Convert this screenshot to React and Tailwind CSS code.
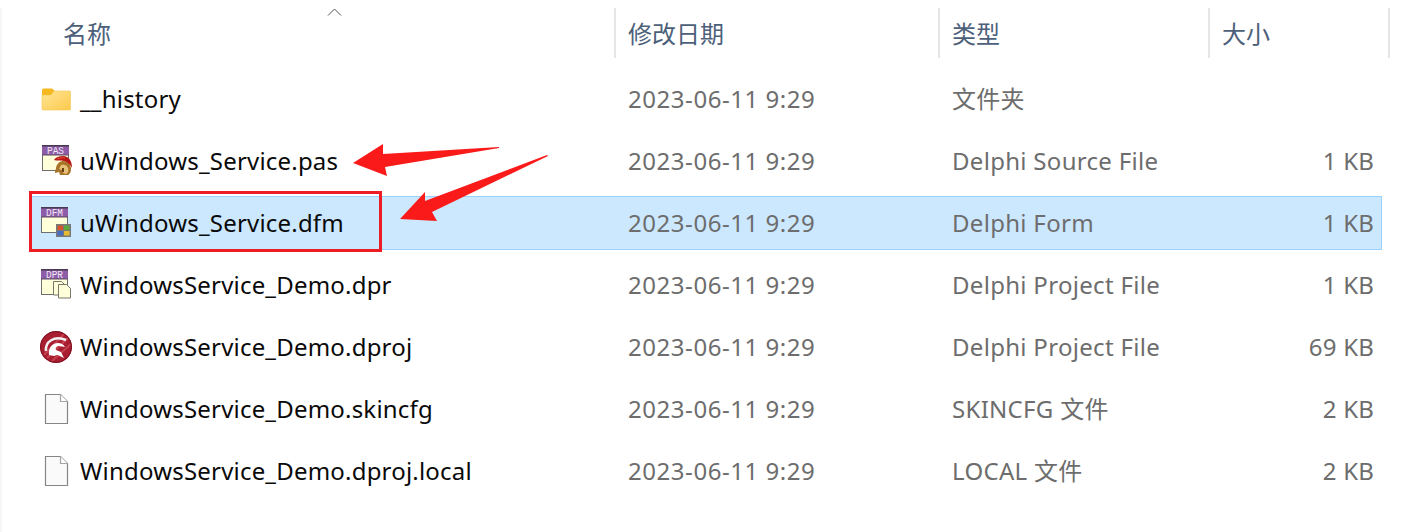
const FONT = "font-['Noto_Sans','Noto_Sans_CJK_SC',sans-serif]";

function Folder() {
  return (
    <svg width="30" height="24" viewBox="0 0 30 24">
      <defs>
        <linearGradient id="folderBody" x1="0" y1="0" x2="1" y2="1">
          <stop offset="0" stopColor="#ffe596" />
          <stop offset="1" stopColor="#fcc94c" />
        </linearGradient>
      </defs>
      <path d="M1 3a1.500 1.500 0 0 1 1.500-1.500h8.500l3 2.500v4h-13z" fill="#f5b81e" />
      <path d="M1 8h9l3-4h15.500a1 1 0 0 1 1 1V22a1 1 0 0 1-1 1H2a1 1 0 0 1-1-1z" fill="url(#folderBody)" stroke="#f3c650" strokeWidth=".6" />
    </svg>
  );
}

function DelphiBase({ label, children }) {
  return (
    <svg width="34" height="34" viewBox="0 0 34 34" className="overflow-visible">
      <rect x="1.500" y="1.500" width="26" height="25" fill="#ffffd9" stroke="#6f6f6f" />
      <rect x="1" y="1" width="27" height="10" fill="#8e5da8" />
      <rect x="1" y="1" width="27" height="1.500" fill="#47394f" />
      <rect x="1" y="10.500" width="27" height="1" fill="#5c4a66" />
      <text x="14.500" y="9.800" textAnchor="middle" fontSize="11" textLength="17" lengthAdjust="spacingAndGlyphs" fill="#f1e8f6" fontFamily="'Liberation Mono', monospace">{label}</text>
      {children}
    </svg>
  );
}

function Helmet() {
  return (
    <g>
      <path d="M15 25c0-4 3-8 7-8 5 0 8 3 8 8 0 3-1 5-3 6h-8l-1-3-4 1c0-2 0-3 1-4z" fill="#a8742a" />
      <path d="M20 21c3-1 6 0 7 3 1 3 0 5-2 6l-3-1-1-3-3-1z" fill="#e6c078" />
      <path d="M13 16c2-3 5-4 9-4 6 0 9 5 9 12-2-4-4-6-8-7-4-1-7 0-10-1z" fill="#b81616" />
      <path d="M16 15c3-1 5-2 8-1" stroke="#dd4a3a" strokeWidth="1" fill="none" />
      <path d="M21 24h2v4h-2z" fill="#6b3f14" />
    </g>
  );
}

function Grid() {
  return (
    <g>
      <rect x="16" y="18" width="15" height="13" fill="#77787c" />
      <rect x="17.500" y="19.500" width="5.500" height="4.500" fill="#d6542c" />
      <rect x="24" y="19.500" width="5.500" height="4.500" fill="#5ca83c" />
      <rect x="17.500" y="25" width="5.500" height="4.500" fill="#4a6cc0" />
      <rect x="24" y="25" width="5.500" height="4.500" fill="#e8bc30" />
    </g>
  );
}

function Pages() {
  return (
    <g fill="#ffffd9" stroke="#77776a">
      <path d="M13.500 13.500h8l3.500 3.500v10h-11.500z" />
      <path d="M18.500 16.500h8l4 4v9.500h-12z" />
    </g>
  );
}

function DelphiLogo() {
  return (
    <svg width="34" height="34" viewBox="0 0 34 34">
      <circle cx="17" cy="17" r="16" fill="#a81e30" />
      <path d="M5 25 25 4M8 28 29 8M13 31 32 14" stroke="#c4404f" strokeWidth="2" />
      <circle cx="17" cy="17" r="15.500" fill="none" stroke="#7c1020" />
      <path d="M7 21C6 12 15 5 27 10" fill="none" stroke="#f0f0f0" strokeWidth="2.500" />
      <path d="M10 25c-1-7 3-12 9-12 3 0 5 1 7 4l-6-1c-2 0-4 2-3 4l5 2 3 6c-3-1-5-3-7-3l-3 1z" fill="#ffffff" />
    </svg>
  );
}

function Doc() {
  return (
    <svg width="25" height="32" viewBox="0 0 25 32">
      <path d="M1.500 1.500h15l7 7v22h-22z" fill="#fafafa" stroke="#858585" strokeWidth="1.200" />
      <path d="M16.500 1.500v7h7" fill="#ffffff" stroke="#a5a5a5" strokeWidth="1.200" />
    </svg>
  );
}

const rows = [
  { icon: <Folder />, name: "__history", date: "2023-06-11 9:29", type: "文件夹", size: "", iconClass: "" },
  { icon: <DelphiBase label="PAS"><Helmet /></DelphiBase>, name: "uWindows_Service.pas", date: "2023-06-11 9:29", type: "Delphi Source File", size: "1 KB", iconClass: "pl-[4px]" },
  { icon: <DelphiBase label="DFM"><Grid /></DelphiBase>, name: "uWindows_Service.dfm", date: "2023-06-11 9:29", type: "Delphi Form", size: "1 KB", selected: true, iconClass: "pl-[2px]" },
  { icon: <DelphiBase label="DPR"><Pages /></DelphiBase>, name: "WindowsService_Demo.dpr", date: "2023-06-11 9:29", type: "Delphi Project File", size: "1 KB", iconClass: "pl-[2px]" },
  { icon: <DelphiLogo />, name: "WindowsService_Demo.dproj", date: "2023-06-11 9:29", type: "Delphi Project File", size: "69 KB", iconClass: "" },
  { icon: <Doc />, name: "WindowsService_Demo.skincfg", date: "2023-06-11 9:29", type: "SKINCFG 文件", size: "2 KB", iconClass: "pl-[2px]" },
  { icon: <Doc />, name: "WindowsService_Demo.dproj.local", date: "2023-06-11 9:29", type: "LOCAL 文件", size: "2 KB", iconClass: "pl-[2px]" },
];

function Row({ r }) {
  return (
    <div className={`flex h-[54px] w-[1352px] items-center border ${r.selected ? "border-[#99d1ff] bg-[#cce8ff]" : "border-transparent"}`}>
      <div className={`flex w-[49px] shrink-0 justify-center ${r.iconClass}`}>{r.icon}</div>
      <div className="w-[548px] shrink-0 whitespace-nowrap tracking-[0.2px] text-[#0a0a0a]">{r.name}</div>
      <div className="w-[324px] shrink-0 whitespace-nowrap tracking-[0.55px] text-[#6d6d6d]">{r.date}</div>
      <div className="flex-1 whitespace-nowrap tracking-[0.3px] text-[#6d6d6d]">{r.type}</div>
      <div className="whitespace-nowrap pr-[7px] text-right tracking-[0.2px] text-[#6d6d6d]">{r.size}</div>
    </div>
  );
}

export default function App() {
  return (
    <div className={`relative h-[532px] w-[1426px] overflow-hidden bg-white pt-2 text-[24px] leading-none ${FONT}`}>
      <div className="h-full border-l-2 border-[#f6f6f6]">
        <div className="flex h-[50px] text-[#4c607a]">
          <div className="relative flex w-[614px] items-center border-r-2 border-[#e5e5e5] pl-[61px] pt-[2px]">
            名称
            <svg className="absolute left-[325px] top-0" width="15" height="8" viewBox="0 0 15 8">
              <path d="M1 7.500 7.500 1 14 7.500" fill="none" stroke="#555" strokeWidth="1" />
            </svg>
          </div>
          <div className="flex w-[324px] items-center border-r-2 border-[#e5e5e5] pl-[12px] pt-[2px]">修改日期</div>
          <div className="flex w-[270px] items-center border-r-2 border-[#e5e5e5] pl-[12px] pt-[2px]">类型</div>
          <div className="flex w-[180px] items-center border-r-2 border-[#e5e5e5] pl-[12px] pt-[2px]">大小</div>
        </div>
        <div className="mt-[14px] flex flex-col gap-2 pl-[28px]">
          {rows.map((r) => <Row key={r.name} r={r} />)}
        </div>
      </div>
      <div className="absolute left-[29px] top-[191px] h-[61px] w-[353px] border-[3px] border-[#ee1c25]" />
      <svg className="absolute left-0 top-0" width="1426" height="532" viewBox="0 0 1426 532">
        <path d="M353 163 383 144 383 154 499 147 499 148 385 167 387 176z" fill="#fa1a1a" />
        <path d="M400 219 425 192 425 201 547 155 548 156 432 212 437 221z" fill="#fa1a1a" />
      </svg>
    </div>
  );
}
